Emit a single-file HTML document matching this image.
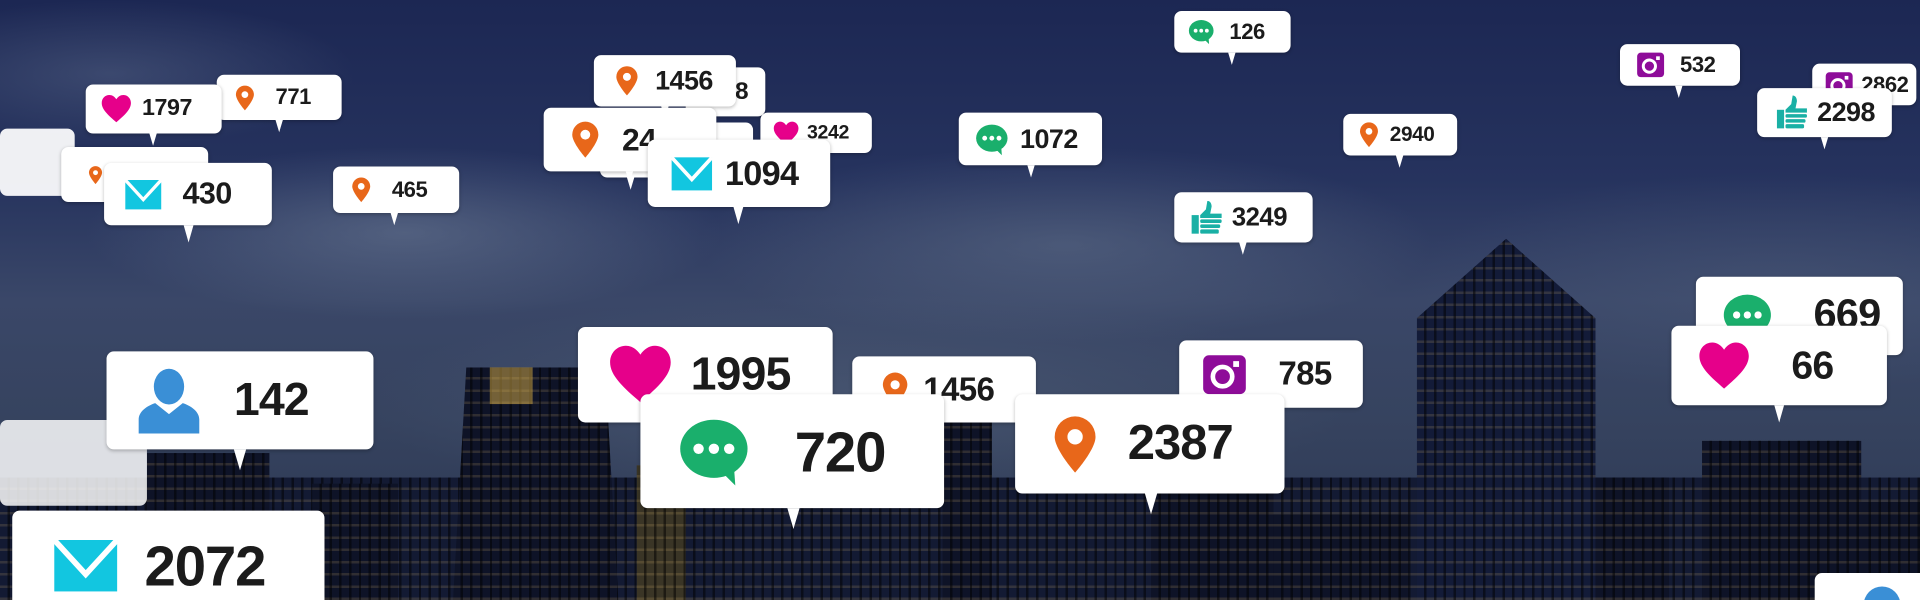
<!DOCTYPE html>
<html><head><meta charset="utf-8"><style>
html,body{margin:0;padding:0;width:1920px;height:600px;overflow:hidden;background:#1e2a52}
#w{position:absolute;left:0;top:0;width:1568px;height:490px;transform:scale(1.22449);transform-origin:0 0;overflow:hidden;
background:
radial-gradient(ellipse 260px 70px at 330px 190px,rgba(110,125,150,.55),transparent),
radial-gradient(ellipse 300px 80px at 870px 200px,rgba(100,115,140,.5),transparent),
radial-gradient(ellipse 200px 60px at 90px 60px,rgba(100,115,145,.4),transparent),
radial-gradient(ellipse 300px 90px at 1450px 230px,rgba(80,95,125,.4),transparent),
radial-gradient(ellipse 400px 90px at 700px 330px,rgba(90,105,130,.45),transparent),
linear-gradient(#1c2753 0%,#26335e 30%,#3a4768 50%,#36435f 70%,#2a3550 100%);
font-family:"Liberation Sans",sans-serif}
.bd{position:absolute;background-color:#0e1327;
background-image:repeating-linear-gradient(90deg,transparent 0 6px,rgba(0,0,0,.5) 6px 8px),repeating-linear-gradient(0deg,rgba(255,210,120,.14) 0 2px,transparent 2px 10px)}
.b{position:absolute;background:#fff;border-radius:6px;display:flex;align-items:center;font-weight:bold;color:#1b1b1b;box-shadow:0 1px 3px rgba(0,0,0,.25);letter-spacing:-.02em}
.b::after{content:'';position:absolute;left:var(--t);top:100%;border-left:var(--s) solid transparent;border-right:var(--s) solid transparent;border-top:calc(var(--s)*3.5) solid #fff;transform:translateX(-50%)}
.b svg{flex:none}
.f{position:absolute;background:rgba(255,255,255,.93);border-radius:6px}
</style></head><body>
<svg width="0" height="0" style="position:absolute">
<defs>
<symbol id="heart" viewBox="0 0 24 24"><path fill="#e6008a" d="M12 22C5 16 1 12 1 7.5 1 4 3.6 1.5 6.7 1.5c2.2 0 4 1.3 5.3 3.2C13.3 2.8 15.1 1.5 17.3 1.5 20.4 1.5 23 4 23 7.5 23 12 19 16 12 22z"/></symbol>
<symbol id="pin" viewBox="0 0 24 24"><path fill="#e8671a" d="M12 1a8 8 0 0 0-8 8c0 5 8 14 8 14s8-9 8-14a8 8 0 0 0-8-8z"/><circle cx="12" cy="9" r="3" fill="#fff"/></symbol>
<symbol id="chat" viewBox="0 0 24 24"><ellipse cx="12" cy="11" rx="11" ry="9.5" fill="#1aaf6c"/><polygon points="14,18 19,23 18.5,16" fill="#1aaf6c"/><circle cx="7" cy="11" r="1.7" fill="#fff"/><circle cx="12" cy="11" r="1.7" fill="#fff"/><circle cx="17" cy="11" r="1.7" fill="#fff"/></symbol>
<symbol id="mail" viewBox="0 0 24 24"><rect x="1" y="3" width="22" height="18" fill="#12c6e0"/><polyline points="1,3 12,15 23,3" fill="none" stroke="#fff" stroke-width="2"/></symbol>
<symbol id="insta" viewBox="0 0 24 24"><rect x="1" y="2" width="22" height="20" rx="3" fill="#8e0c99"/><circle cx="11" cy="13" r="5" fill="none" stroke="#fff" stroke-width="2.4"/><rect x="16.5" y="5" width="3" height="3" fill="#fff"/></symbol>
<symbol id="thumb" viewBox="0 0 24 24"><g fill="#1ab0a5"><rect x="1" y="10" width="5" height="13"/><path d="M7 10l4-4 1-6c2 0 3 2 3 4l-1 5h8v3H7z"/><rect x="7" y="13" width="15" height="2.5" rx="1"/><rect x="7" y="16.5" width="14" height="2.5" rx="1"/><rect x="7" y="20" width="13" height="3" rx="1"/></g></symbol>
<symbol id="user" viewBox="0 0 24 24"><g fill="#3a8fd6"><ellipse cx="12" cy="7" rx="5.5" ry="6.5"/><path d="M1 24v-5c0-3 3-5 6-6l5 4 5-4c3 1 6 3 6 6v5z"/></g></symbol>
</defs></svg>
<div id="w">
<div class="bd" style="left:0;top:390px;width:1568px;height:100px;background-color:#131a33"></div>
<div class="bd" style="left:120px;top:370px;width:100px;height:120px"></div>
<div class="bd" style="left:255px;top:395px;width:70px;height:95px"></div>
<div class="bd" style="left:370px;top:300px;width:135px;height:190px;clip-path:polygon(8% 0,92% 0,100% 100%,0 100%)"></div>
<div style="position:absolute;left:400px;top:300px;width:35px;height:30px;background:#d9b04a;opacity:.5"></div>
<div class="bd" style="left:520px;top:380px;width:40px;height:110px;background-color:#3a3526"></div>
<div class="bd" style="left:770px;top:340px;width:40px;height:150px"></div>
<div class="bd" style="left:940px;top:400px;width:100px;height:90px"></div>
<div class="bd" style="left:1040px;top:420px;width:110px;height:70px"></div>
<div class="bd" style="left:1157px;top:195px;width:146px;height:295px;clip-path:polygon(0 22%,50% 0,100% 22%,100% 100%,0 100%);background-color:#131b38"></div>
<div class="bd" style="left:1303px;top:390px;width:60px;height:100px"></div>
<div class="bd" style="left:1390px;top:360px;width:130px;height:130px"></div>
<div class="bd" style="left:1520px;top:410px;width:48px;height:80px"></div>

<div class="f" style="left:0;top:105px;width:61px;height:55px"></div>
<div class="f" style="left:0;top:343px;width:120px;height:70px;opacity:.9"></div>
<div class="b" style="left:50px;top:120px;width:120px;height:45px;font-size:18px;--t:30px;--s:0px"><svg style="width:16px;height:16px;margin-left:20px"><use href="#pin"/></svg></div>

<div class="b" style="left:959px;top:9px;width:95px;height:34px;font-size:18px;--t:47px;--s:3px"><svg style="width:22px;height:22px;margin:0 12px 0 11px"><use href="#chat"/></svg>126</div>
<div class="b" style="left:1323px;top:36px;width:98px;height:34px;font-size:18px;--t:48px;--s:3px"><svg style="width:24px;height:24px;margin:0 12px 0 13px"><use href="#insta"/></svg>532</div>
<div class="b" style="left:1480px;top:52px;width:85px;height:34px;font-size:18px;--t:40px;--s:0px"><svg style="width:24px;height:24px;margin:0 6px 0 10px"><use href="#insta"/></svg>2862</div>
<div class="b" style="left:1435px;top:72px;width:110px;height:40px;font-size:22px;--t:55px;--s:3px"><svg style="width:28px;height:28px;margin:0 6px 0 15px"><use href="#thumb"/></svg>2298</div>
<div class="b" style="left:177px;top:61px;width:102px;height:37px;font-size:18px;--t:51px;--s:3px"><svg style="width:22px;height:22px;margin:0 14px 0 12px"><use href="#pin"/></svg>771</div>
<div class="b" style="left:70px;top:69px;width:111px;height:40px;font-size:19px;--t:55px;--s:3px"><svg style="width:26px;height:26px;margin:0 8px 0 12px"><use href="#heart"/></svg>1797</div>
<div class="b" style="left:560px;top:55px;width:65px;height:40px;font-size:20px;--t:30px;--s:0px;justify-content:flex-end;padding-right:14px;box-sizing:border-box">8</div>
<div class="b" style="left:485px;top:45px;width:116px;height:42px;font-size:22px;--t:58px;--s:3px"><svg style="width:26px;height:26px;margin:0 10px 0 14px"><use href="#pin"/></svg>1456</div>
<div class="b" style="left:621px;top:92px;width:91px;height:33px;font-size:16px;--t:45px;--s:0px"><svg style="width:22px;height:22px;margin:0 6px 0 10px"><use href="#heart"/></svg>3242</div>
<div class="b" style="left:490px;top:100px;width:125px;height:45px;font-size:22px;--t:25px;--s:3px"></div>
<div class="b" style="left:444px;top:88px;width:141px;height:52px;font-size:26px;--t:70px;--s:3px"><svg style="width:32px;height:32px;margin:0 14px 0 18px"><use href="#pin"/></svg>24</div>
<div class="b" style="left:529px;top:114px;width:149px;height:55px;font-size:28px;--t:74px;--s:4px"><svg style="width:42px;height:36px;margin:0 6px 0 15px"><use href="#mail"/></svg>1094</div>
<div class="b" style="left:1097px;top:93px;width:93px;height:34px;font-size:17px;--t:46px;--s:3px"><svg style="width:22px;height:22px;margin:0 6px 0 10px"><use href="#pin"/></svg>2940</div>
<div class="b" style="left:783px;top:92px;width:117px;height:43px;font-size:22px;--t:59px;--s:3px"><svg style="width:30px;height:28px;margin:0 8px 0 12px"><use href="#chat"/></svg>1072</div>
<div class="b" style="left:959px;top:157px;width:113px;height:41px;font-size:21px;--t:56px;--s:3px"><svg style="width:28px;height:28px;margin:0 6px 0 13px"><use href="#thumb"/></svg>3249</div>
<div class="b" style="left:272px;top:136px;width:103px;height:38px;font-size:18px;--t:50px;--s:3px"><svg style="width:22px;height:22px;margin:0 14px 0 12px"><use href="#pin"/></svg>465</div>
<div class="b" style="left:85px;top:133px;width:137px;height:51px;font-size:25px;--t:69px;--s:4px"><svg style="width:36px;height:32px;margin:0 14px 0 14px"><use href="#mail"/></svg>430</div>

<div class="b" style="left:87px;top:287px;width:218px;height:80px;font-size:38px;--t:109px;--s:5px"><svg style="width:54px;height:56px;margin:0 26px 0 24px"><use href="#user"/></svg>142</div>
<div class="b" style="left:10px;top:417px;width:255px;height:90px;font-size:46px;--t:100px;--s:0px"><svg style="width:68px;height:56px;margin:0 14px 0 26px"><use href="#mail"/></svg>2072</div>
<div class="b" style="left:472px;top:267px;width:208px;height:78px;font-size:38px;--t:100px;--s:0px"><svg style="width:54px;height:54px;margin:0 14px 0 24px"><use href="#heart"/></svg>1995</div>
<div class="b" style="left:696px;top:291px;width:150px;height:54px;font-size:27px;--t:60px;--s:0px"><svg style="width:30px;height:32px;margin:0 8px 0 20px"><use href="#pin"/></svg>1456</div>
<div class="b" style="left:523px;top:322px;width:248px;height:93px;font-size:46px;--t:125px;--s:5px"><svg style="width:68px;height:60px;margin:0 32px 0 26px"><use href="#chat"/></svg>720</div>
<div class="b" style="left:963px;top:278px;width:150px;height:55px;font-size:27px;--t:75px;--s:0px"><svg style="width:40px;height:38px;margin:0 24px 0 17px"><use href="#insta"/></svg>785</div>
<div class="b" style="left:829px;top:322px;width:220px;height:81px;font-size:40px;--t:111px;--s:5px"><svg style="width:50px;height:58px;margin:0 18px 0 24px"><use href="#pin"/></svg>2387</div>
<div class="b" style="left:1385px;top:226px;width:169px;height:64px;font-size:34px;--t:80px;--s:0px;align-items:flex-start;padding-top:12px;box-sizing:border-box"><svg style="width:48px;height:42px;margin:0 30px 0 18px"><use href="#chat"/></svg>669</div>
<div class="b" style="left:1365px;top:266px;width:176px;height:65px;font-size:32px;--t:88px;--s:4px"><svg style="width:46px;height:44px;margin:0 32px 0 20px"><use href="#heart"/></svg>66</div>
<div class="b" style="left:1482px;top:468px;width:100px;height:40px;--t:50px;--s:0px"><div style="width:30px;height:30px;border-radius:50%;background:#3a8fd6;margin:12px 0 0 40px"></div></div>
</div>
</body></html>
